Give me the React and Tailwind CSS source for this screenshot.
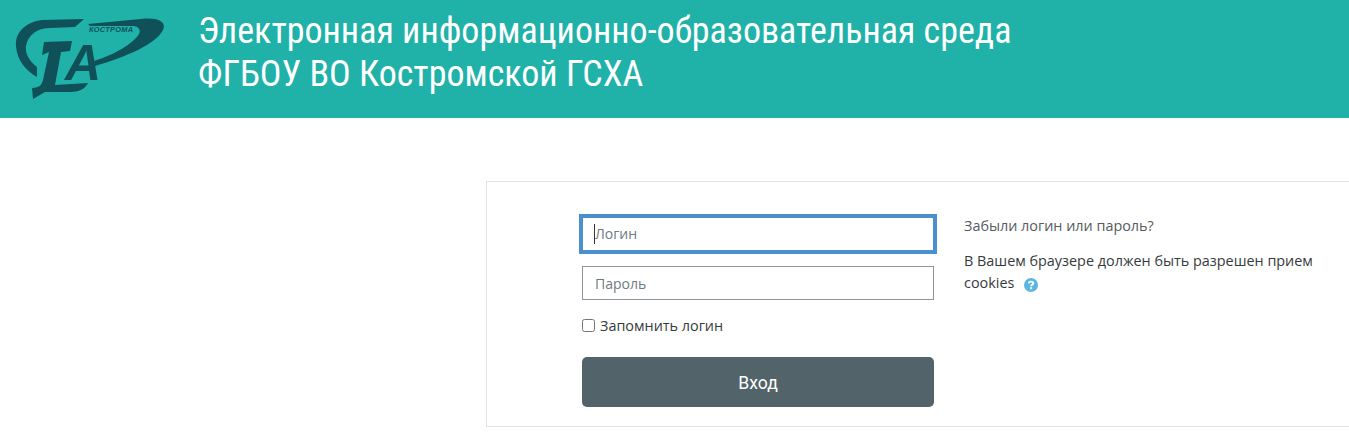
import React from "react";

const Logo = () => (
  <svg viewBox="0 0 170 105" className="w-[170px] h-[105px] shrink-0" fill="#0f5059">
    {/* emblem: left arc, right swoosh, monogram stroke */}
    <path d="M84 19 L42 20 C26 22 15 32 16 46 C17 60 26 71 37 77 L37 67 C29 61 25 53 26 46 C28 35 37 28 50 28 L75 27 Z" />
    <path d="M88 24 L141 19 C158 17 167 22 163 30 C156 44 126 57 95 66 L94 61 C114 55 134 43 139 34 C141 30 139 27 134 26 L90 26 Z" />
    <path d="M44 42 L72 41 L70 51 L61 52 L55 85 L88 83 C85 89 79 92 70 92 L45 92 L33 99 L32 88 C40 88 42 84 43 80 L49 52 L42 55 Z" />
    <text x="89" y="32" fontFamily="Liberation Sans, sans-serif" fontSize="7.4" fontWeight="700" fontStyle="italic" letterSpacing="0.3">
      КОСТРОМА
    </text>
    <text x="65" y="80" fontFamily="Liberation Sans, sans-serif" fontSize="50" fontWeight="700" fontStyle="italic" textLength="33">
      А
    </text>
  </svg>
);

export default function App() {
  return (
    <div className="bg-white min-h-[437px] overflow-hidden" style={{ fontFamily: '"Open Sans", sans-serif' }}>
      <header className="h-[118px] bg-[#20b1a9] flex items-start">
        <Logo />
        <h1 className="ml-[28px] pt-[10px] font-['Roboto',sans-serif] text-[36px] leading-[43px] text-white [font-stretch:condensed] whitespace-nowrap">
          Электронная информационно-образовательная среда
          <br />
          ФГБОУ ВО Костромской ГСХА
        </h1>
      </header>

      <main className="mt-[63px] ml-[486px] w-[870px] h-[246px] border border-[#e3e3e3] flex pl-[95px] pt-[31px]">
        <form className="w-[352px] shrink-0 flex flex-col">
          <div className="relative mt-[4px]">
            <input
              placeholder="Логин"
              className="block w-full h-[34px] px-3 pb-[2px] text-sm bg-white border border-[#8f959e] outline-[4px] outline-[#4a8fce] outline-offset-[-1px] placeholder:text-[#6e7a82]"
            />
            {/* text caret of the focused field */}
            <span className="absolute left-[12px] top-[7px] w-px h-[20px] bg-[#333]" />
          </div>
          <input
            placeholder="Пароль"
            className="w-full h-[34px] mt-[15px] px-3 text-sm bg-white border border-[#8f959e] placeholder:text-[#6e7a82]"
          />
          <label className="mt-[17px] h-[18px] flex items-center gap-[5px] text-[14.4px] text-[#373a3c]">
            <input type="checkbox" className="w-[13px] h-[13px] m-0 -mt-[2px]" />
            Запомнить логин
          </label>
          <button
            type="button"
            className="mt-[22px] h-[50px] rounded-[5px] bg-[#52646a] text-white pt-[3px] text-[17.6px] font-['Roboto',sans-serif]"
          >
            Вход
          </button>
        </form>

        <div className="ml-[30px] w-[360px] text-[14.4px] leading-[22px] text-[#373a3c]">
          <p className="mt-[2px] text-[#555b60]">Забыли логин или пароль?</p>
          <p className="mt-[13px]">
            В Вашем браузере должен быть разрешен прием cookies
            <svg viewBox="0 0 14 14" className="inline-block align-[-4px] ml-[10px] w-[14px] h-[14px]">
              <circle cx="7" cy="7" r="7" fill="#5bb7de" />
              <path d="M4.8 5.4 C4.9 3.2 9.3 3 9.3 5.3 C9.3 6.8 7.1 6.8 7.1 8.3" fill="none" stroke="#fff" strokeWidth="1.8" />
              <rect x="6.1" y="9.3" width="2" height="1.9" fill="#fff" />
            </svg>
          </p>
        </div>
      </main>
    </div>
  );
}
